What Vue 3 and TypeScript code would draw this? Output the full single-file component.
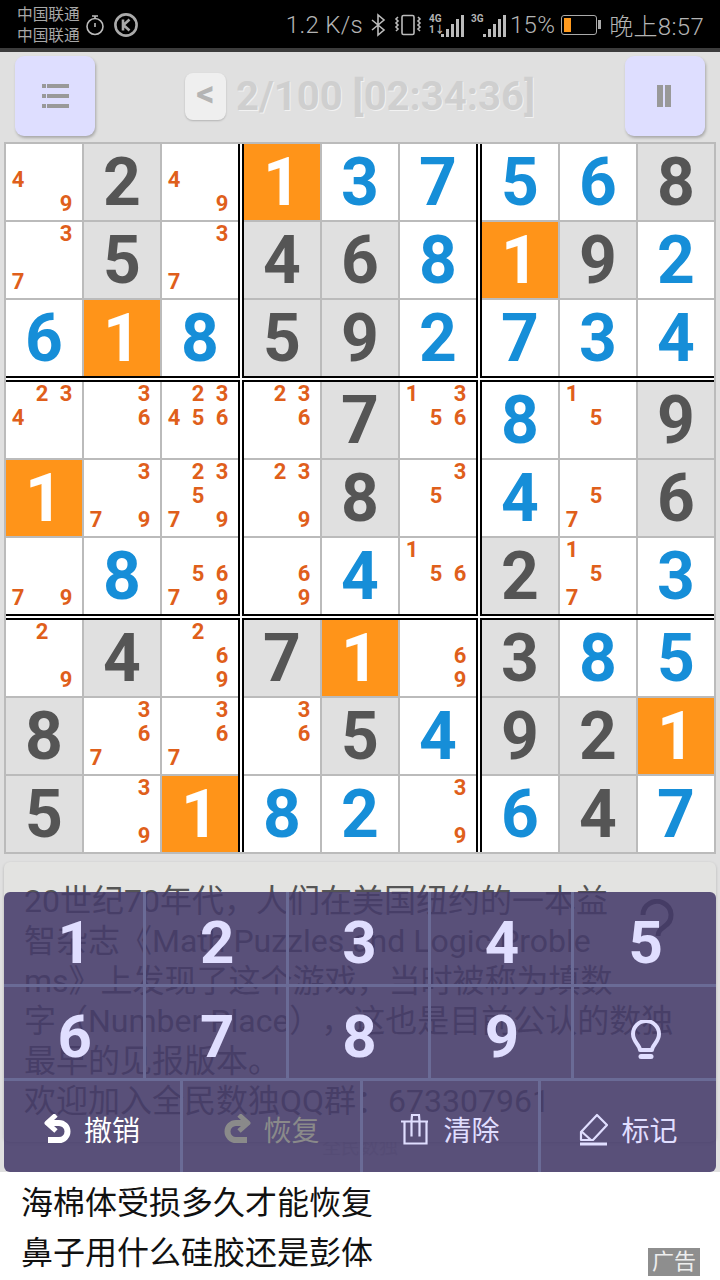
<script setup lang="ts">
// each cell: g = given, b = solved, o = highlighted, n = pencil notes
const board: string[][] = [
  ['n49', 'g2', 'n49', 'o1', 'b3', 'b7', 'b5', 'b6', 'g8'],
  ['n37', 'g5', 'n37', 'g4', 'g6', 'b8', 'o1', 'g9', 'b2'],
  ['b6', 'o1', 'b8', 'g5', 'g9', 'b2', 'b7', 'b3', 'b4'],
  ['n234', 'n36', 'n23456', 'n236', 'g7', 'n1356', 'b8', 'n15', 'g9'],
  ['o1', 'n379', 'n23579', 'n239', 'g8', 'n35', 'b4', 'n57', 'g6'],
  ['n79', 'b8', 'n5679', 'n69', 'b4', 'n156', 'g2', 'n157', 'b3'],
  ['n29', 'g4', 'n269', 'g7', 'o1', 'n69', 'g3', 'b8', 'b5'],
  ['g8', 'n367', 'n367', 'n36', 'g5', 'b4', 'g9', 'g2', 'o1'],
  ['g5', 'n39', 'o1', 'b8', 'b2', 'n39', 'b6', 'g4', 'b7'],
];

// the board is drawn as 9 boxes of 9 cells so the double rules sit between boxes
const boxes = [0, 1, 2, 3, 4, 5, 6, 7, 8].map((i) => {
  const r = Math.floor(i / 3) * 3;
  const c = (i % 3) * 3;
  const cells: string[] = [];
  for (let y = r; y < r + 3; y++) {
    for (let x = c; x < c + 3; x++) cells.push(board[y][x]);
  }
  return cells;
});

const notes = ['1', '2', '3', '4', '5', '6', '7', '8', '9'];
const keys = ['1', '2', '3', '4', '5', '6', '7', '8', '9'];

const introLines = [
  '20世纪70年代，人们在美国纽约的一本益',
  '智杂志《Math Puzzles and Logic Proble',
  'ms》上发现了这个游戏，当时被称为填数',
  '字（Number Place），这也是目前公认的数独',
  '最早的见报版本。',
  '欢迎加入全民数独QQ群：673307961',
];
</script>

<template>
  <div class="page">
    <div class="status">
      <div class="carrier">
        <span>中国联通</span>
        <span>中国联通</span>
      </div>
      <svg class="ic-timer" width="20" height="22" viewBox="0 0 20 22" fill="none" stroke="#bbb" stroke-width="1.6">
        <circle cx="10" cy="12.5" r="8" />
        <path d="M7 2h6M10 2v2.5M10 9v4" />
      </svg>
      <svg class="ic-k" width="26" height="26" viewBox="0 0 26 26" fill="none" stroke="#aaa" stroke-width="2.6">
        <circle cx="13" cy="13" r="10.6" />
        <path d="M10 7.5v11M16.5 7.5 10.5 13l6 5.5" />
      </svg>
      <div class="status-right">
        <span class="speed">1.2 K/s</span>
        <svg class="ic-bt" width="16" height="24" viewBox="0 0 16 24" fill="none" stroke="#bbb" stroke-width="1.6">
          <path d="M2 7l12 10-6 5V2l6 5L2 17" />
        </svg>
        <svg class="ic-vib" width="28" height="24" viewBox="0 0 28 24" fill="none" stroke="#bbb" stroke-width="1.6">
          <rect x="8" y="2.5" width="12" height="19" rx="1.5" />
          <path d="M4 4l-2 2 2 2-2 2 2 2-2 2 2 2-2 2M24 4l2 2-2 2 2 2-2 2 2 2-2 2 2 2" />
        </svg>
        <div class="sig">
          <span class="sig-tag">4G<br />1↓</span>
          <i style="height: 3px" /><i style="height: 8px" /><i style="height: 13px" /><i style="height: 18px" /><i style="height: 22px" />
        </div>
        <div class="sig">
          <span class="sig-tag">3G<br />&nbsp;</span>
          <i style="height: 3px" /><i style="height: 8px" /><i style="height: 13px" /><i style="height: 18px" /><i style="height: 22px" />
        </div>
        <span class="pct">15%</span>
        <div class="batt">
          <div class="batt-body"><div class="batt-fill" /></div>
          <div class="batt-tip" />
        </div>
        <span class="clock">晚上8:57</span>
      </div>
    </div>

    <div class="topbar">
      <button class="square">
        <svg width="27" height="24" viewBox="0 0 27 24" fill="#999">
          <rect x="0" y="0" width="4" height="4" />
          <rect x="5" y="0" width="22" height="4" />
          <rect x="0" y="10" width="4" height="4" />
          <rect x="5" y="10" width="22" height="4" />
          <rect x="0" y="20" width="4" height="4" />
          <rect x="5" y="20" width="22" height="4" />
        </svg>
      </button>
      <div class="progress">
        <button class="back">&lt;</button>
        <span class="progress-text">2/100 [02:34:36]</span>
      </div>
      <button class="square pause">
        <svg width="14" height="22" viewBox="0 0 14 22" fill="#999">
          <rect x="0" y="0" width="6" height="22" />
          <rect x="8" y="0" width="6" height="22" />
        </svg>
      </button>
    </div>

    <div class="board">
      <div v-for="(box, b) in boxes" :key="b" class="box" :class="['box-' + b]">
        <template v-for="(cell, i) in box" :key="i">
          <div v-if="cell[0] === 'n'" class="cell notes">
            <span v-for="n in notes" :key="n" class="note">{{ cell.includes(n) ? n : '' }}</span>
          </div>
          <div v-else class="cell digit" :class="'kind-' + cell[0]">{{ cell[1] }}</div>
        </template>
      </div>
    </div>

    <div class="card">
      <div class="intro">
        <div v-for="line in introLines" :key="line">{{ line }}</div>
      </div>
      <svg class="help" width="34" height="46" viewBox="0 0 34 46" fill="none" stroke="#444" stroke-width="5">
        <path d="M3 16a14 13.500 0 1 1 22 11c-4 3-7 5-7 10" />
      </svg>
    </div>
    <div class="brand">全民数独</div>

    <div class="ad">
      <div>海棉体受损多久才能恢复</div>
      <div>鼻子用什么硅胶还是彭体</div>
      <span class="ad-tag">广告</span>
    </div>

    <div class="keypad">
      <div class="keys">
        <div v-for="k in keys" :key="k" class="key">{{ k }}</div>
        <div class="key">
          <svg class="bulb" width="32" height="40" viewBox="0 0 32 40" fill="none" stroke="#e0deff" stroke-width="4">
            <path d="M10 30c0-5-7-8-7-16a13 13 0 0 1 26 0c0 8-7 11-7 16z" stroke-linejoin="round" />
            <path d="M11 36.500h10" stroke-width="5" stroke-linecap="round" />
          </svg>
        </div>
      </div>
      <div class="actions">
        <div class="action">
          <svg width="28" height="30" viewBox="0 0 28 30" fill="none" stroke="#fff" stroke-width="6">
            <path d="M6 9h9a8 8 0 0 1 0 17H4" />
            <path d="M12 1 3 9l9 8" stroke-width="5" stroke-linejoin="round" />
          </svg>
          <span>撤销</span>
        </div>
        <div class="action off">
          <svg width="28" height="30" viewBox="0 0 28 30" fill="none" stroke="#8a8a8a" stroke-width="6">
            <path d="M22 9h-9a8 8 0 0 0 0 17h11" />
            <path d="M16 1l9 8-9 8" stroke-width="5" stroke-linejoin="round" />
          </svg>
          <span>恢复</span>
        </div>
        <div class="action tint">
          <svg width="30" height="32" viewBox="0 0 30 32" fill="none" stroke="#e0deff" stroke-width="2.200">
            <path d="M0 8.500h27M3.500 8.500v22h22V8.500M10.500 8.500v15M18.500 8.500v15" />
            <path d="M10.500 8.500 11 2h7l.5 6.500" />
          </svg>
          <span>清除</span>
        </div>
        <div class="action tint">
          <svg width="30" height="34" viewBox="0 0 30 34" fill="none" stroke="#e0deff" stroke-width="2.200">
            <path d="M2 20 18 3l10 10-14 15H2z" stroke-linejoin="round" />
            <path d="M2 19l10 9" />
            <path d="M1 32h27" stroke-width="3" />
          </svg>
          <span>标记</span>
        </div>
      </div>
    </div>
  </div>
</template>

<style>
html,
body {
  margin: 0;
  background: #fff;
}
</style>

<style scoped>
.page {
  position: relative;
  width: 720px;
  height: 1280px;
  overflow: hidden;
  display: flex;
  flex-direction: column;
  background: #e0e0e0;
  font-family: Roboto, "Noto Sans CJK SC", sans-serif;
  text-spacing-trim: space-all;
}

.status {
  box-sizing: border-box;
  height: 52px;
  flex: none;
  display: flex;
  align-items: center;
  padding: 1px 16px 0 17px;
  background: #000;
  border-bottom: 4px solid #3c3c3c;
  color: #b4b4b4;
}
.carrier {
  display: flex;
  flex-direction: column;
  margin-top: 1px;
  font-size: 15.700px;
  line-height: 21px;
  color: #a8a8a8;
}
.ic-timer {
  margin-left: 5px;
}
.ic-k {
  margin-left: 8px;
}
.status-right {
  margin-left: auto;
  display: flex;
  align-items: center;
  gap: 4px;
}
.speed,
.pct,
.clock {
  font-size: 24px;
  font-weight: 300;
  letter-spacing: 0.3px;
  white-space: nowrap;
}
.speed {
  margin-right: 3px;
}
.ic-bt {
  margin-right: 4px;
}
.sig {
  display: flex;
  align-items: flex-end;
  gap: 2px;
  height: 24px;
  margin-left: 3px;
}
.sig i {
  width: 3px;
  background: #bbb;
}
.sig-tag {
  width: 12px;
  margin-right: -2px;
  font-size: 10px;
  font-weight: 700;
  line-height: 11px;
  align-self: flex-start;
  white-space: nowrap;
}
.batt {
  display: flex;
  align-items: center;
  gap: 1px;
  margin: 0 4px 0 2px;
}
.batt-body {
  box-sizing: border-box;
  width: 36px;
  height: 20px;
  padding: 2px;
  border: 1.500px solid #aaa;
  border-radius: 3px;
}
.batt-fill {
  width: 7px;
  height: 100%;
  background: #ff9a1e;
}
.batt-tip {
  width: 3px;
  height: 9px;
  background: #aaa;
}

.topbar {
  box-sizing: border-box;
  height: 90px;
  flex: none;
  display: flex;
  align-items: center;
  justify-content: space-between;
  padding: 0 15px 2px;
}
.square {
  width: 80px;
  height: 80px;
  padding: 0;
  border: 0;
  border-radius: 9px;
  background: #dedeff;
  box-shadow: 1px 2px 3px rgba(0, 0, 0, 0.25);
  display: flex;
  align-items: center;
  justify-content: center;
}
.pause {
  padding-right: 2px;
}
.progress {
  display: flex;
  align-items: center;
  gap: 10px;
}
.back {
  width: 41px;
  height: 47px;
  padding: 0 0 4px;
  border: 0;
  border-radius: 8px;
  background: #efefef;
  box-shadow: 0 1px 2px rgba(0, 0, 0, 0.2);
  color: #b4b4b4;
  font: 700 36px Roboto, sans-serif;
}
.progress-text {
  font-size: 40px;
  font-weight: 700;
  color: #cfcfcf;
  text-shadow: 1px 1px 0 #f2f2f2;
  white-space: nowrap;
}

.board {
  box-sizing: border-box;
  flex: none;
  width: 712px;
  height: 712px;
  margin: 0 4px;
  display: grid;
  grid-template-columns: 234px 236px 234px;
  grid-template-rows: 234px 236px 234px;
  gap: 2px;
  border: 2px solid #bbb;
  background: #fff;
}
.box {
  display: grid;
  grid-template-columns: repeat(3, 76px);
  grid-template-rows: repeat(3, 76px);
  gap: 2px;
  background: #bbb;
  border: 0 solid #000;
}
.box-0,
.box-3,
.box-6 {
  border-right-width: 2px;
}
.box-1,
.box-4,
.box-7 {
  border-left-width: 2px;
  border-right-width: 2px;
}
.box-2,
.box-5,
.box-8 {
  border-left-width: 2px;
}
.box-0,
.box-1,
.box-2 {
  border-bottom-width: 2px;
}
.box-3,
.box-4,
.box-5 {
  border-top-width: 2px;
  border-bottom-width: 2px;
}
.box-6,
.box-7,
.box-8 {
  border-top-width: 2px;
}
.cell {
  background: #fff;
}
.digit {
  box-sizing: border-box;
  display: flex;
  align-items: center;
  justify-content: center;
  padding-top: 1px;
  font-size: 66px;
  font-weight: 700;
  line-height: 76px;
}
.kind-g {
  background: #e0e0e0;
  color: #555;
}
.kind-b {
  color: #168ed8;
}
.kind-o {
  background: #ff9419;
  color: #fff;
}
.notes {
  display: grid;
  grid-template-columns: repeat(3, 24px);
  grid-template-rows: repeat(3, 24px);
}
.note {
  text-align: center;
  font-size: 22px;
  font-weight: 700;
  line-height: 24px;
  color: #df5f1b;
}

.card {
  box-sizing: border-box;
  position: relative;
  flex: none;
  height: 280px;
  margin: 8px 4px 0;
  padding: 19px 20px 0;
  border-radius: 6px;
  background: #e3e3e1;
  box-shadow: 0 1px 3px rgba(0, 0, 0, 0.2);
}
.intro {
  font-size: 32px;
  line-height: 40px;
  white-space: nowrap;
  color: #555;
}
.help {
  position: absolute;
  top: 37px;
  right: 42px;
}
.brand {
  flex: none;
  margin-top: -7px;
  height: 0;
  text-align: center;
  font-size: 19px;
  line-height: 26px;
  color: #c4c4c4;
}

.ad {
  position: relative;
  margin-top: auto;
  box-sizing: border-box;
  height: 108px;
  padding: 6px 21px 0;
  background: #fff;
  font-size: 32px;
  line-height: 50px;
  color: #111;
}
.ad-tag {
  position: absolute;
  right: 20px;
  bottom: 4px;
  width: 52px;
  height: 28px;
  background: #8e8e8e;
  color: #eee;
  font-size: 22px;
  line-height: 28px;
  text-align: center;
}

.keypad {
  position: absolute;
  top: 892px;
  left: 4px;
  width: 712px;
  height: 280px;
  box-sizing: border-box;
  overflow: hidden;
  border-radius: 6px;
  background: rgba(69, 59, 106, 0.88);
}
.keys {
  display: grid;
  grid-template-columns: repeat(5, 1fr);
  grid-template-rows: 95px 94px;
}
.key {
  box-sizing: border-box;
  display: flex;
  align-items: center;
  justify-content: center;
  padding: 8px 0 0 2px;
  border-right: 3px solid #6a6b96;
  border-bottom: 3px solid #6a6b96;
  font-size: 60px;
  font-weight: 700;
  color: #e0deff;
}
.key:nth-child(5n) {
  border-right: 0;
}
.bulb {
  margin-top: 6px;
}
.actions {
  display: grid;
  grid-template-columns: 176px 180px 178px 178px;
  height: 91px;
}
.action {
  box-sizing: border-box;
  display: flex;
  align-items: center;
  justify-content: center;
  gap: 12px;
  padding-top: 5px;
  border-left: 3px solid #6a6b96;
  font-size: 28px;
  color: #fff;
}
.action:first-child {
  border-left: 0;
}
.off {
  color: #8a8a8a;
}
.tint {
  color: #e0deff;
}
</style>
